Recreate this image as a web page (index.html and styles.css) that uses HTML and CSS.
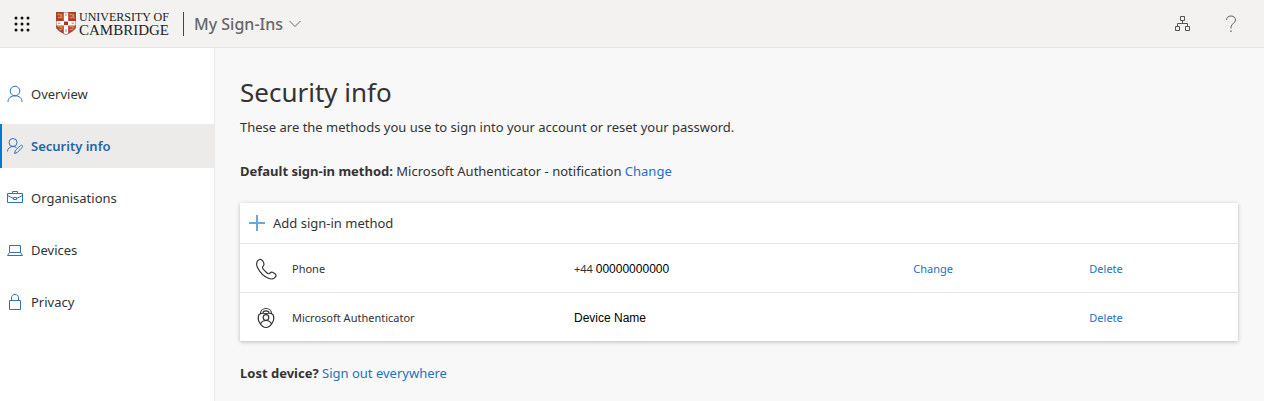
FILE: index.html
```html
<!DOCTYPE html>
<html lang="en">
<head>
    <meta charset="UTF-8">
    <meta name="viewport" content="width=device-width, initial-scale=1.0">
    <title>My Sign-Ins | Security info</title>
    <link rel="stylesheet" href="styles.css">
</head>
<body>
<header class="header">
    <button class="header_btn apps" type="button" aria-label="App launcher">
        <svg width="16" height="16" viewBox="0 0 16 16" fill="#111">
            <circle cx="2" cy="2" r="1.5"/><circle cx="8" cy="2" r="1.5"/><circle cx="14" cy="2" r="1.5"/>
            <circle cx="2" cy="8" r="1.5"/><circle cx="8" cy="8" r="1.5"/><circle cx="14" cy="8" r="1.5"/>
            <circle cx="2" cy="14" r="1.5"/><circle cx="8" cy="14" r="1.5"/><circle cx="14" cy="14" r="1.5"/>
        </svg>
    </button>
    <a class="logo" href="#">
        <svg width="20" height="23" viewBox="0 0 20 23">
            <clipPath id="shield"><path d="M0 0H20V14C20 18 15 20 10 23C5 20 0 18 0 14Z"/></clipPath>
            <g clip-path="url(#shield)">
                <path fill="#b83a2c" d="M0 0H20V23H0Z"/>
                <g fill="none" stroke="#cf9440" stroke-width="1.3">
                    <path d="M1.500 2.500H4L5 3.500L6.500 2.500M2 5.500H4L5.500 4.500L6.500 6.500"/>
                    <path d="M13.500 2.500H16L17 3.500L18.500 2.500M14 5.500H16L17.500 4.500L18.500 6.500"/>
                    <path d="M1.500 14.500H4L5 15.500L6.500 14.500M3 17.500H5L6.500 16.500"/>
                    <path d="M13.500 14.500H16L17 15.500L18.500 14.500M14 17.500H16L17.500 16.500"/>
                </g>
                <path fill="#fff" d="M7.800 0H12.200V9H20V13.400H12.200V23H7.800V13.400H0V9H7.800Z"/>
                <path fill="#9a8f8c" d="M9.500 1.500H10.500V4H9.500ZM9.500 17H10.500V20H9.500ZM2 10.700H4.500V11.700H2ZM15.500 10.700H18V11.700H15.500Z"/>
                <path fill="#b8322a" d="M8 9.500H12V13H8Z"/>
            </g>
            <path fill="none" stroke="#8d4a3c" stroke-width=".6" d="M.3 .3H19.700V14C19.700 18 15 20 10 22.600C5 20 .3 18 .3 14Z"/>
        </svg>
        <span class="logo_text">
            <span class="logo_top">UNIVERSITY OF</span>
            <span class="logo_bottom">CAMBRIDGE</span>
        </span>
    </a>
    <button class="header_title" type="button">
        My Sign-Ins
        <svg width="12" height="8" viewBox="0 0 12 8" fill="none" stroke="#666"><path d="M.5 1L6 6.500L11.500 1"/></svg>
    </button>
    <div class="header_right">
        <button class="header_btn" type="button" aria-label="Organisations">
            <svg width="16" height="16" viewBox="0 0 16 16" fill="none" stroke="#555">
                <path d="M5.500 .5H9.500V4.500H5.500ZM.5 10.500H4.500V14.500H.5ZM10.500 10.500H14.500V14.500H10.500ZM7.500 4.500V7.500M2.500 10.500V7.500H12.500V10.500"/>
            </svg>
        </button>
        <button class="header_btn" type="button" aria-label="Help">
            <svg width="12" height="18" viewBox="0 0 12 18" fill="none" stroke="#666">
                <path d="M1.500 5C1.500 2.500 3.300 1 6 1S10.500 2.600 10.500 5C10.500 8.500 6 8.500 6 12V13.500"/>
                <path d="M6 15.500V17" stroke-width="1.300"/>
            </svg>
        </button>
    </div>
</header>
<div class="page">
    <nav class="menu">
        <a class="menu_item" href="#">
            <svg width="16" height="18" viewBox="0 0 16 18"><circle cx="8" cy="6" r="4.800"/><path d="M1 17C1 13 4 10.800 8 10.800S15 13 15 17"/></svg>
            Overview
        </a>
        <a class="menu_item active" href="#">
            <svg width="16" height="18" viewBox="0 0 16 18"><circle cx="6" cy="5.500" r="4"/><path d="M.5 14.500C.5 11.500 3 9.500 6 9.500C7.500 9.500 8.500 10 9.500 10.700M7.500 16.500L8.300 13.500L13.500 8.500C14.800 7.600 16.200 9 15.300 10.300L10.300 15.500Z"/></svg>
            Security info
        </a>
        <a class="menu_item" href="#">
            <svg width="16" height="18" viewBox="0 0 16 18"><path d="M.5 4.500H15.500V13.500H.5ZM5.500 4.500V2.500H10.500V4.500M.5 6.500L6.500 9.500M15.500 6.500L9.500 9.500M6.500 8.500H9.500V10.500H6.500Z"/></svg>
            Organisations
        </a>
        <a class="menu_item" href="#">
            <svg width="16" height="18" viewBox="0 0 16 18"><path d="M2.500 4.500H13.500V11.500H2.500ZM2.500 11.500L.5 14.500H15.500L13.500 11.500"/></svg>
            Devices
        </a>
        <a class="menu_item" href="#">
            <svg width="16" height="18" viewBox="0 0 16 18"><path d="M2.500 7.500H13.500V16.500H2.500ZM4.500 7.500V5C4.500 2.500 6 1.500 8 1.500S11.500 2.500 11.500 5V7.500"/></svg>
            Privacy
        </a>
    </nav>
    <main class="content">
        <h1 class="title">Security info</h1>
        <p class="text">These are the methods you use to sign into your account or reset your password.</p>
        <p class="text default"><b>Default sign-in method:</b> Microsoft Authenticator - notification <a href="#">Change</a></p>
        <section class="card">
            <button class="add" type="button">
                <svg width="16" height="16" viewBox="0 0 16 16" fill="none" stroke="#6fa5de" stroke-width="2"><path d="M0 8H16M8 0V16"/></svg>
                Add sign-in method
            </button>
            <table class="methods">
                <colgroup>
                    <col class="col_icon"><col class="col_name"><col class="col_value"><col class="col_change"><col>
                </colgroup>
                <tr>
                    <td class="icon">
                        <svg width="24" height="24" viewBox="0 0 24 24"><path d="M5.500 2.500C3 3.500 1.500 6.500 3.500 10.500C6.500 16.500 10.500 20 15 21.500C18 22.500 21 21.500 22 19C22.500 17.500 21 16.500 19 15.500C17.500 14.700 16.500 15.500 15.500 16.500C14.500 17.300 13.500 16.500 12 15C10.500 13.500 8.800 12 8.500 10.800C8.200 9.500 10 9 10 7.300C10 5.500 7.800 1.500 5.500 2.500Z"/></svg>
                    </td>
                    <td>Phone</td>
                    <td>+44 <span class="value">00000000000</span></td>
                    <td><a href="#">Change</a></td>
                    <td><a href="#">Delete</a></td>
                </tr>
                <tr>
                    <td class="icon">
                        <svg width="24" height="24" viewBox="0 0 24 24"><path d="M12 7.500C9.500 7 7 7.200 5 8.500C4 11 4 14 5.500 16.500C7 19.300 9.500 21.500 12 21.500S17 19.300 18.500 16.500C20 14 20 11 19 8.500C17 7.200 14.500 7 12 7.500ZM6.500 7.500C6.500 4.500 9 2.500 12 2.500S17.500 4.500 17.500 7.500M9 7C9 5.500 10 4.800 12 4.800S15 5.500 15 7M6.500 18C7.500 15.500 9.500 14.500 12 14.500S16.500 15.500 17.500 18"/><circle cx="12" cy="11.500" r="2.800"/></svg>
                    </td>
                    <td>Microsoft Authenticator</td>
                    <td><span class="value">Device Name</span></td>
                    <td></td>
                    <td><a href="#">Delete</a></td>
                </tr>
            </table>
        </section>
        <p class="text lost"><b>Lost device?</b> <a href="#">Sign out everywhere</a></p>
    </main>
</div>
</body>
</html>
```

FILE: styles.css
```css
* {
    box-sizing: border-box;
    margin: 0;
    padding: 0;
}
body {
    min-height: 100vh;
    display: flex;
    flex-direction: column;
    font-family: 'Noto Sans', 'Open Sans', sans-serif;
    font-size: 13px;
    line-height: 20px;
    color: #333;
    background: #f8f8f8;
}
button {
    font: inherit;
    color: inherit;
    background: none;
    border: 0;
    cursor: pointer;
}
a {
    color: #2272c3;
    text-decoration: none;
}
svg {
    display: block;
    flex-shrink: 0;
}
.header {
    display: flex;
    align-items: center;
    height: 48px;
    background: #f3f2f1;
    border-bottom: 1px solid #e6e5e4;
}
.header_btn {
    display: flex;
    align-items: center;
    justify-content: center;
    width: 48px;
    height: 44px;
}
.apps {
    width: 44px;
}
.logo {
    display: flex;
    align-items: center;
    gap: 3px;
    padding-left: 12px;
    color: #222;
    font-family: 'Liberation Serif', serif;
}
.logo_text {
    display: flex;
    flex-direction: column;
}
.logo_top {
    font-size: 12px;
    line-height: 12px;
}
.logo_bottom {
    font-size: 15px;
    line-height: 14px;
}
.header_title {
    display: flex;
    align-items: center;
    gap: 6px;
    height: 24px;
    margin-left: 14px;
    padding-left: 10px;
    border-left: 1px solid #444;
    font-size: 16px;
    font-weight: 500;
    color: #666;
}
.header_right {
    display: flex;
    margin-left: auto;
    padding-right: 9px;
}
.page {
    flex: 1;
    display: flex;
}
.menu {
    display: flex;
    flex-direction: column;
    gap: 8px;
    width: 215px;
    flex-shrink: 0;
    padding-top: 24px;
    background: #fff;
    border-right: 1px solid #eaeaea;
}
.menu_item {
    display: flex;
    align-items: center;
    gap: 8px;
    height: 44px;
    padding-left: 5px;
    border-left: 2px solid transparent;
    color: #333;
}
.menu_item svg {
    fill: none;
    stroke: #2f72b8;
}
.active {
    background: #edebe9;
    border-left-color: #0078d4;
    color: #2366a8;
    font-weight: 600;
}
.content {
    flex: 1;
    padding: 24px 26px 16px 25px;
}
.title {
    font-size: 26px;
    font-weight: 400;
    line-height: 40px;
    margin-bottom: 5px;
}
.default {
    margin: 24px 0 22px;
}
.card {
    background: #fff;
    box-shadow: 0 1px 4px rgba(0, 0, 0, .25);
}
.add {
    display: flex;
    align-items: center;
    gap: 8px;
    height: 40px;
    padding-left: 9px;
}
.methods {
    width: 100%;
    table-layout: fixed;
    border-collapse: collapse;
    font-size: 11px;
}
.methods td {
    height: 49px;
    padding-top: 2px;
    border-top: 1px solid #e6e6e6;
    vertical-align: middle;
}
.methods tr:last-child td {
    height: 48px;
}
.methods .icon {
    padding-left: 14px;
}
.icon svg {
    fill: none;
    stroke: #333;
    stroke-width: 1.2;
}
.col_icon {
    width: 52px;
}
.col_name {
    width: 282px;
}
.col_value {
    width: 34%;
}
.col_change {
    width: 176px;
}
.value {
    font-family: 'Liberation Sans', Arial, sans-serif;
    font-size: 12px;
    color: #000;
}
.lost {
    margin-top: 22px;
}
```
